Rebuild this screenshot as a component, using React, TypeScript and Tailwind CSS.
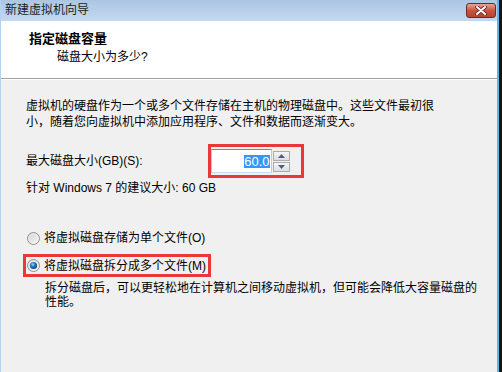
import React from "react";

const FONT = {
  fontFamily: '"Liberation Sans", "Noto Sans CJK SC", sans-serif',
};

function Radio({ checked }: { checked: boolean }) {
  return (
    <svg width="13" height="13" viewBox="0 0 13 13" className="shrink-0">
      <defs>
        <linearGradient id={checked ? "rg1" : "rg0"} x1="0" y1="0" x2="1" y2="1">
          <stop offset="0" stopColor="#d0d0d0" />
          <stop offset="1" stopColor="#f8f8f8" />
        </linearGradient>
        <radialGradient id="dot" cx="0.4" cy="0.35" r="0.7">
          <stop offset="0" stopColor="#8fd3ff" />
          <stop offset="0.45" stopColor="#1f7cc9" />
          <stop offset="1" stopColor="#0b3a6e" />
        </radialGradient>
      </defs>
      <circle cx="6.5" cy="6.5" r="6" fill={`url(#${checked ? "rg1" : "rg0"})`} stroke="#8e8f8f" strokeWidth="1" />
      <circle cx="6.5" cy="6.5" r="4.6" fill="none" stroke="#f4f4f4" strokeWidth="0.8" />
      {checked && <circle cx="6.5" cy="6.5" r="3.6" fill="url(#dot)" />}
    </svg>
  );
}

function Arrow({ up }: { up: boolean }) {
  return (
    <svg width="7" height="4" viewBox="0 0 7 4">
      {up ? <polygon points="0,4 7,4 3.5,0" fill="#4c5f84" /> : <polygon points="0,0 7,0 3.5,4" fill="#4c5f84" />}
    </svg>
  );
}

export default function App() {
  return (
    <div className="w-[502px] h-[372px] flex overflow-hidden bg-[#f0f0f0] text-black" style={FONT}>
      <div className="flex-1 flex flex-col border-l border-[#b4d2f1]">
        {/* Title bar */}
        <div className="h-[21px] flex items-start justify-between bg-gradient-to-b from-[#abc6e3] to-[#c4d9ef] pl-[4px] pr-[1px]">
          <div className="text-[12px] leading-[21px] text-[#1c1c1c]">新建虚拟机向导</div>
          <div className="mt-[3px] w-[30px] h-[15px] rounded-[3px] border border-[#6e2a22] bg-gradient-to-b from-[#e6a596] via-[#c8553f] to-[#b9432c] flex items-center justify-center">
            <svg width="12" height="9" viewBox="0 0 12 9">
              <path d="M2 1 L10 8 M10 1 L2 8" stroke="#5a2018" strokeWidth="3.6" strokeLinecap="round" />
              <path d="M2 1 L10 8 M10 1 L2 8" stroke="#ffffff" strokeWidth="2" strokeLinecap="round" />
            </svg>
          </div>
        </div>
        {/* Header */}
        <div className="h-[58px] bg-white border-b border-[#a0a0a0] flex flex-col">
          <div className="mt-[10px] ml-[28px] text-[13px] leading-[16px] font-bold">指定磁盘容量</div>
          <div className="mt-[2px] ml-[56px] text-[12px] leading-[16px]">磁盘大小为多少?</div>
        </div>
        {/* Body */}
        <div className="flex-1 flex flex-col pl-[25px] text-[12px] border-t border-white">
          <div className="mt-[19px] leading-[15.5px] w-[420px]">
            虚拟机的硬盘作为一个或多个文件存储在主机的物理磁盘中。这些文件最初很小，随着您向虚拟机中添加应用程序、文件和数据而逐渐变大。
          </div>
          <div className="mt-[14px] flex items-center">
            <div className="w-[182px] leading-[16px]">最大磁盘大小(GB)(S):</div>
            <div className="w-[96px] h-[34px] border-[3px] border-[#e8383a] flex items-start pt-[2px]">
              <div className="w-[61px] h-[24px] bg-white border border-t-[#5d8fbf] border-l-[#b3cde6] border-r-[#b3cde6] border-b-[#c8def2] flex items-center justify-end pr-[1px]">
                <span className="bg-[#3399ff] text-white leading-[13px] px-[0.5px] text-[13px]">60.0</span>
              </div>
              <div className="ml-[1px] mt-[2px] w-[17px] flex flex-col gap-[1px]">
                <div className="h-[10px] border border-[#acacac] bg-gradient-to-b from-[#f6f6f6] to-[#dedede] flex items-center justify-center">
                  <Arrow up />
                </div>
                <div className="h-[10px] border border-[#acacac] bg-gradient-to-b from-[#f6f6f6] to-[#dedede] flex items-center justify-center">
                  <Arrow up={false} />
                </div>
              </div>
            </div>
          </div>
          <div className="mt-[2px] leading-[16px]">针对 Windows 7 的建议大小: 60 GB</div>
          <div className="mt-[34px] flex items-center gap-[4px] h-[16px] ml-[1px]">
            <Radio checked={false} />
            <span className="leading-[16px]">将虚拟磁盘存储为单个文件(O)</span>
          </div>
          <div className="mt-[8px] ml-[-3px] w-[188px] h-[23px] border-[3px] border-[#e8383a] flex items-center gap-[4px] pl-[1px]">
            <Radio checked />
            <span className="leading-[16px]">将虚拟磁盘拆分成多个文件(M)</span>
          </div>
          <div className="mt-[4px] ml-[19px] w-[440px] leading-[14px]">
            拆分磁盘后，可以更轻松地在计算机之间移动虚拟机，但可能会降低大容量磁盘的性能。
          </div>
        </div>
      </div>
      <div className="w-[2px] bg-[#62b2ea]" />
      <div className="w-[3px] bg-[#141414]" />
    </div>
  );
}
